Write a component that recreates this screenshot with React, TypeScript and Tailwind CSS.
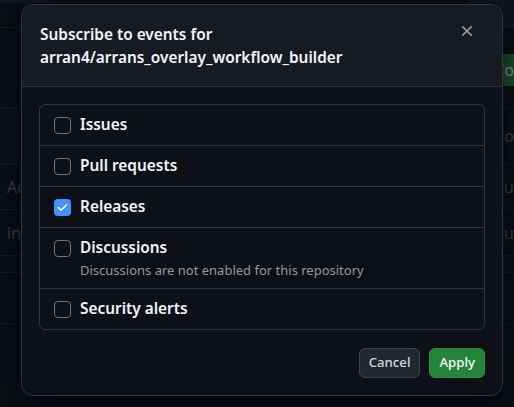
import React from "react";

const rows = [
  { label: "Issues", checked: false },
  { label: "Pull requests", checked: false },
  { label: "Releases", checked: true },
  { label: "Discussions", checked: false, desc: "Discussions are not enabled for this repository" },
  { label: "Security alerts", checked: false },
];

function Checkbox({ checked }: { checked: boolean }) {
  if (checked) {
    return (
      <span className="mt-[3.5px] flex h-[17px] w-[17px] shrink-0 items-center justify-center rounded-[4px] bg-[#4493f8]">
        <svg width="13" height="13" viewBox="0 0 16 16" fill="none">
          <path d="M3 8.2l3.2 3.2L13 4.6" stroke="#ffffff" strokeWidth="1.9" strokeLinecap="round" strokeLinejoin="round" />
        </svg>
      </span>
    );
  }
  return <span className="mt-[3.5px] block h-[17px] w-[17px] shrink-0 rounded-[4px] border border-[#6e7681]" />;
}

export default function App() {
  return (
    <div className="relative h-[407px] w-[514px] overflow-hidden bg-[#0a0d12] font-['Noto_Sans',sans-serif]">
      {/* dimmed page behind */}
      <div className="flex flex-col text-[16px] text-[#3b4148]">
        <div className="flex h-[27px] justify-between">
          <div className="h-[3px] w-[50px] rounded-br-[6px] bg-[#12161c]" />
          <div className="h-[27px] w-[45px] bg-[#11151b]" />
        </div>
        <div className="flex h-[80px] border-t border-[#171b21]">
          <div className="w-[503px]" />
          <div className="flex-1 border-l border-[#171b21] pt-[26px]">
            <div className="flex h-[32px] items-center bg-[#1c4a2b] pl-[2px] text-[#7f9886]">Co</div>
          </div>
        </div>
        <div className="flex h-[57px] border-t border-[#171b21] bg-[#0d1116]">
          <div className="w-[503px]" />
          <div className="flex flex-1 items-center border-l border-[#171b21] text-[#3b4148]">Co</div>
        </div>
        <div className="flex h-[45px] border-t border-[#171b21]">
          <div className="flex w-[503px] items-center pl-[7px]">Ac</div>
          <div className="flex flex-1 items-center border-l border-[#171b21] pl-[1px]">u</div>
        </div>
        <div className="flex h-[46px] border-t border-[#171b21]">
          <div className="flex w-[503px] items-center pl-[7px]">in</div>
          <div className="flex flex-1 items-center border-l border-[#171b21] pl-[1px]">u</div>
        </div>
        <div className="flex h-[17px] border-t border-[#171b21]">
          <div className="w-[503px]" />
          <div className="flex-1 border-l border-[#171b21]" />
        </div>
        <div className="flex h-[52px] border-y border-[#171b21]">
          <div className="w-[503px]" />
          <div className="flex-1 border-l border-[#171b21]" />
        </div>
      </div>

      {/* dialog overlay */}
      <div className="absolute inset-0 pl-[21px] pt-[4px]">
        <div className="w-[482px] overflow-hidden rounded-[12px] border border-[#30363d] bg-[#0d1117] shadow-[0_8px_24px_rgba(1,4,9,0.75)]">
          <div className="flex items-start justify-between border-b border-[#30363d] bg-[#161b22] pb-[17px] pl-[18px] pr-[26px] pt-[18px]">
            <h1 className="text-[15.4px] font-semibold leading-[23px] text-[#f0f6fc]">
              Subscribe to events for
              <br />
              arran4/arrans_overlay_workflow_builder
            </h1>
            <button className="mt-[-1px] text-[#9198a1]">
              <svg width="18" height="18" viewBox="0 0 16 16" fill="currentColor">
                <path d="M3.72 3.72a.75.75 0 0 1 1.06 0L8 6.94l3.22-3.22a.749.749 0 0 1 1.275.326.749.749 0 0 1-.215.734L9.06 8l3.22 3.22a.749.749 0 0 1-.326 1.275.749.749 0 0 1-.734-.215L8 9.06l-3.22 3.22a.751.751 0 0 1-1.042-.018.751.751 0 0 1-.018-1.042L6.94 8 3.72 4.78a.75.75 0 0 1 0-1.06Z" />
              </svg>
            </button>
          </div>
          <div className="px-[17px] pb-[18px] pt-[17px]">
            <div className="rounded-[6px] border border-[#30363d]">
              {rows.map((r, i) => (
                <div
                  key={r.label}
                  className={`flex items-start gap-[9px] py-[8px] pl-[14px] ${i > 0 ? "border-t border-[#30363d]" : ""}`}
                >
                  <Checkbox checked={r.checked} />
                  <div className="flex flex-col">
                    <span className="text-[15.4px] font-semibold leading-[24px] text-[#f0f6fc]">{r.label}</span>
                    {r.desc && <span className="text-[13px] leading-[20px] text-[#9198a1]">{r.desc}</span>}
                  </div>
                </div>
              ))}
            </div>
          </div>
          <div className="flex justify-end gap-[9px] px-[17px] pb-[17px]">
            <button className="h-[30px] rounded-[6px] border border-[#3d444d] bg-[#212830] px-[9px] text-[13.2px] font-medium text-[#d1d7e0]">
              Cancel
            </button>
            <button className="h-[30px] rounded-[6px] border border-[#2a8f3e] bg-[#238636] px-[9px] text-[13.2px] font-medium text-white">
              Apply
            </button>
          </div>
        </div>
      </div>
    </div>
  );
}
